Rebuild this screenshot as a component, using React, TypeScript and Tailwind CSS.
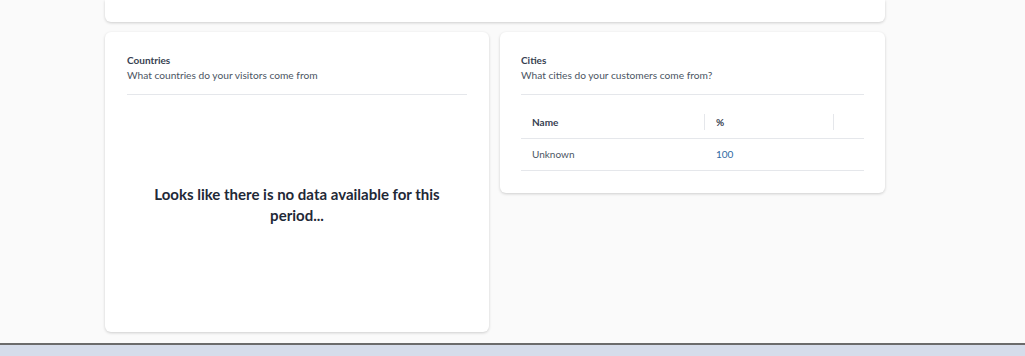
export default function App() {
  return (
    <div className="h-[356px] w-full overflow-hidden bg-[#fafafa] flex flex-col font-['Lato',sans-serif] text-[#1f2937]">
      <div className="flex-1 flex flex-col">
        {/* bottom of the card above */}
        <div className="mx-[105px] w-[780px] h-[22px] bg-white rounded-b-md shadow-[0_1px_3px_rgba(0,0,0,0.18)]" />

        <div className="mt-[10px] ml-[105px] flex items-start gap-[11px]">
          {/* Countries */}
          <div className="w-[384px] h-[300px] bg-white rounded-md shadow-[0_1px_3px_rgba(0,0,0,0.18)] px-[22px] pt-[21px] flex flex-col">
            <div className="pb-[11px] border-b border-[#e5e7eb]">
              <div className="text-[10px] font-bold text-[#374151] leading-[15px]">Countries</div>
              <div className="text-[10.2px] text-[#4b5563] leading-[15px]">What countries do your visitors come from</div>
            </div>
            <div className="flex-1 flex items-center justify-center pb-[18px]">
              <p className="text-[15px] font-bold text-[#1f2937] text-center leading-[21px] w-[300px]">
                Looks like there is no data available for this period...
              </p>
            </div>
          </div>

          {/* Cities */}
          <div className="w-[385px] bg-white rounded-md shadow-[0_1px_3px_rgba(0,0,0,0.18)] px-[21px] pt-[21px] pb-[22px]">
            <div className="pb-[11px] border-b border-[#e5e7eb]">
              <div className="text-[10px] font-bold text-[#374151] leading-[15px]">Cities</div>
              <div className="text-[10.2px] text-[#4b5563] leading-[15px]">What cities do your customers come from?</div>
            </div>
            <div className="mt-[19px] text-[10px]">
              <div className="flex border-b border-[#e5e7eb] h-[25px] items-start">
                <div className="w-[184px] h-[16px] px-[11px] flex items-center font-bold text-[#374151] border-r border-[#e5e7eb]">Name</div>
                <div className="w-[129px] h-[16px] px-[11px] flex items-center font-bold text-[#374151] border-r border-[#e5e7eb]">%</div>
                <div className="flex-1" />
              </div>
              <div className="flex border-b border-[#e5e7eb] h-[32px] items-center">
                <div className="w-[184px] px-[11px] text-[#4b5563]">Unknown</div>
                <div className="w-[129px] px-[11px] text-[#2f6aa3]">100</div>
              </div>
            </div>
          </div>
        </div>
      </div>
      <div className="h-[13px] border-t-2 border-[#6b6b6b] bg-[#d5dcea]" />
    </div>
  )
}
